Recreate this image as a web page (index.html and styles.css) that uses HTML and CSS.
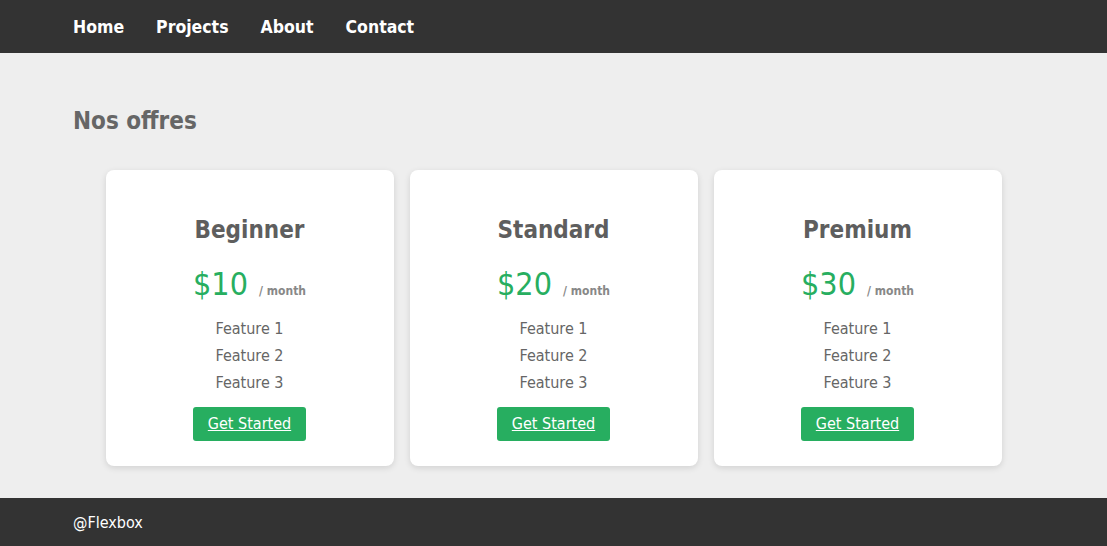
FILE: index.html
```html
<!DOCTYPE html>
<html>
<head>
  <meta charset="utf-8"/>
  <title>Nos offres</title>
  <link rel="stylesheet" href="styles.css">
</head>
<body>

  <!-- ---------- NAV BAR ---------- -->
  <header class="navbar">
    <a href="#">Home</a>
    <a href="#">Projects</a>
    <a href="#">About</a>
    <a href="#">Contact</a>
  </header>

  <!-- ---------- MAIN CONTENT ---------- -->
  <main class="content">
    <h1>Nos offres</h1>

    <div class="pricing">
      <div class="card">
        <h2>Beginner</h2>
        <p class="price">$10 <span>/ month</span></p>
        <ul class="features">
          <li>Feature 1</li>
          <li>Feature 2</li>
          <li>Feature 3</li>
        </ul>
        <a href="#" class="btn">Get Started</a>
      </div>

      <div class="card">
        <h2>Standard</h2>
        <p class="price">$20 <span>/ month</span></p>
        <ul class="features">
          <li>Feature 1</li>
          <li>Feature 2</li>
          <li>Feature 3</li>
        </ul>
        <a href="#" class="btn">Get Started</a>
      </div>

      <div class="card">
        <h2>Premium</h2>
        <p class="price">$30 <span>/ month</span></p>
        <ul class="features">
          <li>Feature 1</li>
          <li>Feature 2</li>
          <li>Feature 3</li>
        </ul>
        <a href="#" class="btn">Get Started</a>
      </div>
    </div>
  </main>

  <!-- ---------- FOOTER ---------- -->
  <footer class="footer">@Flexbox</footer>

</body>
</html>
```

FILE: styles.css
```css
/* Basic reset */
* {
  box-sizing: border-box;
  margin: 0;
  padding: 0;
}
body {
  font-family: Tahoma, "DejaVu Sans", sans-serif;
  font-stretch: condensed;
  background: #eeeeee;
  color: #666;
}

/* ---------- NAV BAR ---------- */
.navbar {
  display: flex;
  align-items: center;
  gap: 32px;
  height: 53px;
  padding: 0 73px;
  background-color: #333333;
}
.navbar a {
  color: #fff;
  text-decoration: none;
  font-weight: bold;
  font-size: 17.5px;
}

/* ---------- MAIN ---------- */
.content {
  padding: 54px 73px 32px;
}
h1 {
  font-size: 24px;
  line-height: 29px;
  color: #666;
  margin-bottom: 34px;
}
.pricing {
  display: flex;
  justify-content: center;
  gap: 16px;
}
.card {
  width: 288px;
  background: #fff;
  border-radius: 8px;
  box-shadow: 0 2px 6px rgba(0,0,0,0.12);
  padding: 46px 20px 25px;
  display: flex;
  flex-direction: column;
  align-items: center;
  text-align: center;
}
.card h2 {
  font-size: 24px;
  line-height: 29px;
  color: #5e5e5e;
}
.price {
  margin-top: 20px;
  font-size: 32px;
  line-height: 38px;
  color: #27ae60;
}
.price span {
  font-size: 12px;
  font-weight: bold;
  color: #888;
  margin-left: 2px;
}
.features {
  list-style: none;
  margin-top: 5px;
  font-size: 16px;
  line-height: 27px;
  color: #666;
}
.btn {
  margin-top: 11px;
  display: inline-block;
  background: #27ae60;
  color: #fff;
  font-size: 16px;
  line-height: 34px;
  padding: 0 15px;
  border-radius: 3px;
}

/* ---------- FOOTER ---------- */
.footer {
  height: 48px;
  display: flex;
  align-items: center;
  padding: 0 73px;
  background: #333333;
  color: #fff;
  font-size: 16px;
}
```
